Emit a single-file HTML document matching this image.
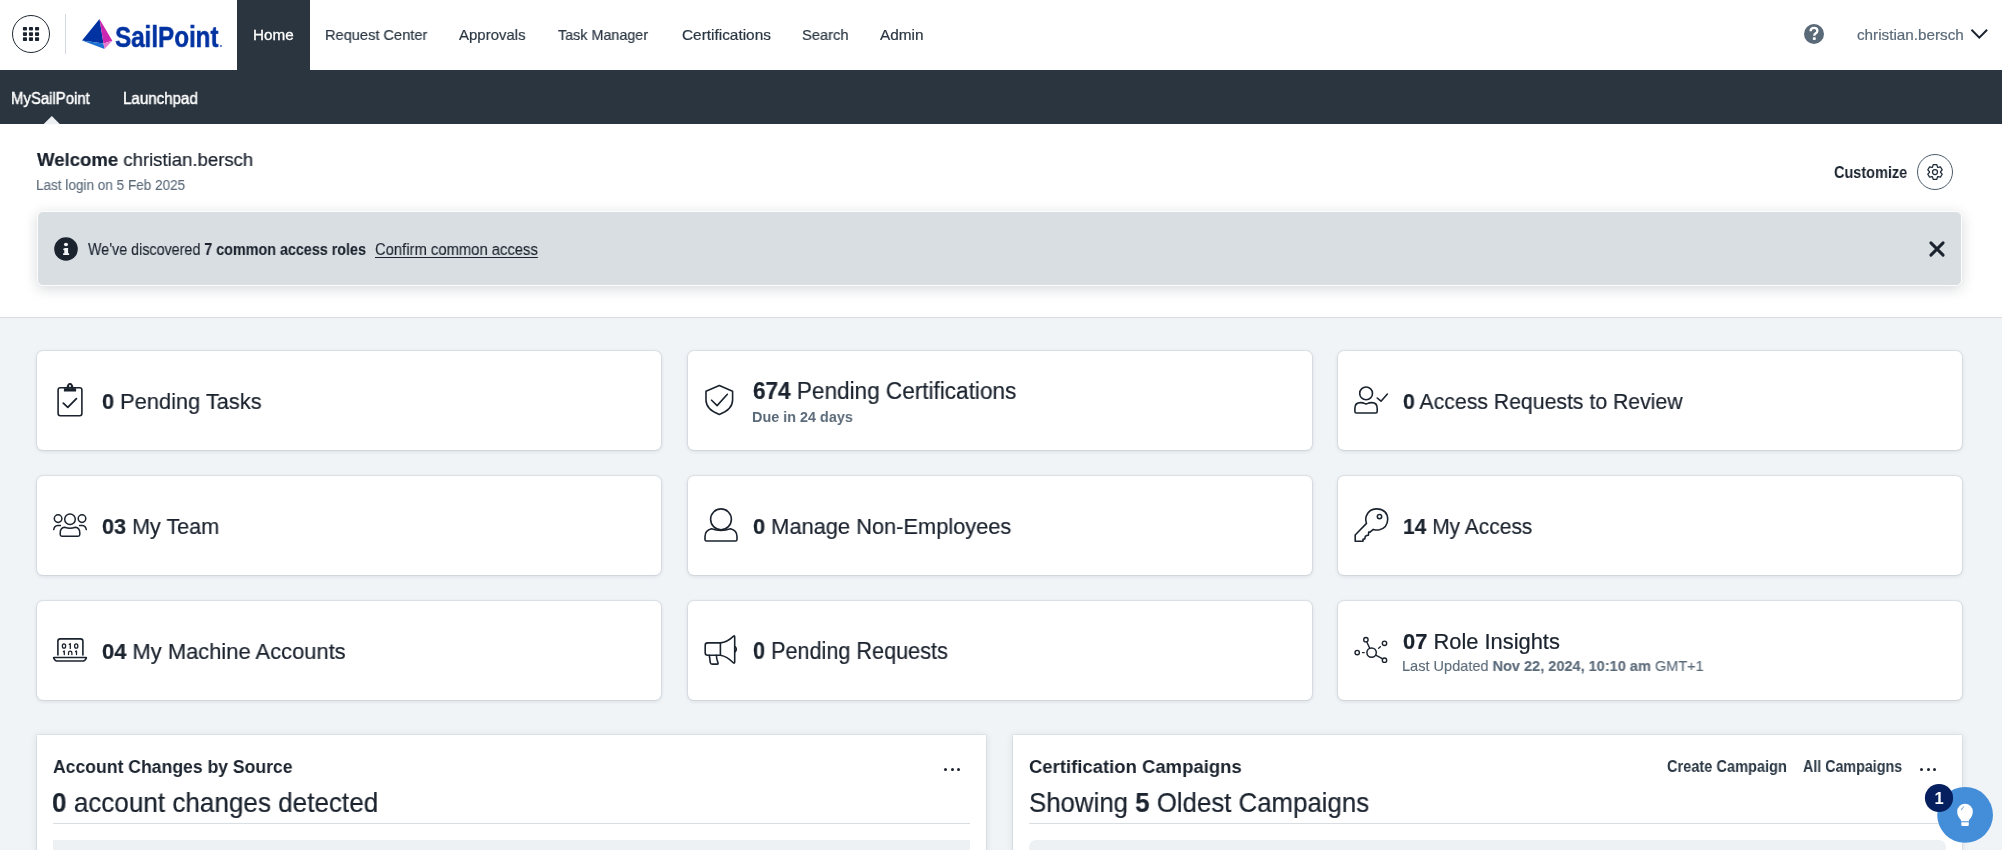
<!DOCTYPE html>
<html><head><meta charset="utf-8"><title>SailPoint</title><style>
*{box-sizing:border-box}
html,body{margin:0;padding:0}
body{width:2002px;height:850px;overflow:hidden;position:relative;background:#f0f4f7;font-family:"Liberation Sans",sans-serif}
.a{position:absolute}
.t{position:absolute;white-space:nowrap;line-height:normal;font-family:"Liberation Sans",sans-serif;transform-origin:0 0;will-change:transform}
.t b{font-weight:700}
.card{position:absolute;width:624.3px;height:99px;background:#fff;border-radius:6px;box-shadow:0 0 0 1px rgba(40,60,80,0.07),0 1px 4px rgba(30,45,60,0.14)}
.panel{position:absolute;background:#fff;box-shadow:0 0 0 1px rgba(40,60,80,0.06),0 1px 7px rgba(30,45,60,0.13)}
svg{position:absolute;overflow:visible}
</style></head><body>
<div class="a" style="left:0;top:0;width:2002px;height:70px;background:#fff"></div>
<div class="a" style="left:12px;top:15px;width:38px;height:38px;border-radius:50%;border:1.5px solid #1f2933"></div>
<svg class="a" style="left:0;top:0" width="60" height="70" viewBox="0 0 60 70" fill="#1b232e"><rect x="22.9" y="26.9" width="4.1" height="3.7" rx="0.8"/><rect x="22.9" y="32.2" width="4.1" height="3.7" rx="0.8"/><rect x="22.9" y="37.3" width="4.1" height="3.7" rx="0.8"/><rect x="28.9" y="26.9" width="4.1" height="3.7" rx="0.8"/><rect x="28.9" y="32.2" width="4.1" height="3.7" rx="0.8"/><rect x="28.9" y="37.3" width="4.1" height="3.7" rx="0.8"/><rect x="35.0" y="26.9" width="4.1" height="3.7" rx="0.8"/><rect x="35.0" y="32.2" width="4.1" height="3.7" rx="0.8"/><rect x="35.0" y="37.3" width="4.1" height="3.7" rx="0.8"/></svg>
<div class="a" style="left:65px;top:14px;width:1px;height:40px;background:#d3d9de"></div>
<svg class="a" style="left:0;top:0" width="240" height="70" viewBox="0 0 240 70">
<polygon points="99.5,19 82,40.5 103.5,43.5" fill="#0033a1"/>
<polygon points="99.5,19 112.3,40.8 103.5,43.5" fill="#cc27b0"/>
<polygon points="82,40.5 103.5,43.5 104.5,49" fill="#1a6fd0"/>
<polygon points="103.5,43.5 112.3,40.8 104.5,49" fill="#e27ad0"/>
</svg>
<div class="t" style="left:114.5px;top:19.8px;font-size:29.5px;font-weight:700;color:#0033a1;-webkit-text-stroke:0.5px #0033a1;transform:scaleX(0.82);transform-origin:0 0">SailPoint</div>
<div class="a" style="left:219.5px;top:44.5px;width:2.4px;height:2.4px;border-radius:50%;border:0.6px solid #0033a1"></div>
<div class="a" style="left:237px;top:0;width:73px;height:70px;background:#2b353f"></div>
<div class="t" style="left:252.6px;top:26.0px;font-size:15.0px;transform:scaleX(1.0179);font-weight:400;color:#ffffff;-webkit-text-stroke-width:0.3px;">Home</div>
<div class="t" style="left:325.3px;top:26.0px;font-size:15.0px;transform:scaleX(0.9741);font-weight:400;color:#2a3642;-webkit-text-stroke-width:0.2px;">Request Center</div>
<div class="t" style="left:459.4px;top:26.0px;font-size:15.0px;transform:scaleX(0.997);font-weight:400;color:#2a3642;-webkit-text-stroke-width:0.2px;">Approvals</div>
<div class="t" style="left:558.4px;top:26.0px;font-size:15.0px;transform:scaleX(0.9559);font-weight:400;color:#2a3642;-webkit-text-stroke-width:0.2px;">Task Manager</div>
<div class="t" style="left:681.6px;top:26.0px;font-size:15.0px;transform:scaleX(1.0253);font-weight:400;color:#2a3642;-webkit-text-stroke-width:0.2px;">Certifications</div>
<div class="t" style="left:801.6px;top:26.0px;font-size:15.0px;transform:scaleX(0.9783);font-weight:400;color:#2a3642;-webkit-text-stroke-width:0.2px;">Search</div>
<div class="t" style="left:880.0px;top:26.0px;font-size:15.0px;transform:scaleX(1.0238);font-weight:400;color:#2a3642;-webkit-text-stroke-width:0.2px;">Admin</div>
<div class="t" style="left:1856.8px;top:26.0px;font-size:15.0px;transform:scaleX(1.0162);font-weight:400;color:#5a6a78;-webkit-text-stroke-width:0.2px;">christian.bersch</div>
<svg class="a" style="left:1794px;top:14px" width="40" height="40" viewBox="0 0 40 40">
<circle cx="20" cy="20" r="10" fill="#5a6a78"/>
<path d="M16.6 17.2 Q16.6 13.8 20 13.8 Q23.4 13.8 23.4 16.8 Q23.4 18.6 21.4 19.6 Q20.3 20.2 20.3 21.8" stroke="#fff" stroke-width="2.3" fill="none" stroke-linecap="butt"/>
<rect x="18.9" y="23.3" width="2.8" height="2.6" fill="#fff"/>
</svg>
<svg class="a" style="left:1960px;top:20px" width="40" height="30" viewBox="0 0 40 30"><polyline points="11.5,9.8 19.3,17.6 27.1,9.8" stroke="#1b232e" stroke-width="2" fill="none"/></svg>
<div class="a" style="left:0;top:70px;width:2002px;height:54px;background:#2b353f"></div>
<div class="t" style="left:11.4px;top:90.2px;font-size:15.86px;transform:scaleX(0.941);font-weight:400;color:#ffffff;-webkit-text-stroke-width:0.45px;">MySailPoint</div>
<div class="t" style="left:122.6px;top:90.2px;font-size:15.86px;transform:scaleX(0.9532);font-weight:400;color:#ffffff;-webkit-text-stroke-width:0.45px;">Launchpad</div>
<div class="a" style="left:0;top:124px;width:2002px;height:194px;background:#fff;border-bottom:1px solid #d7dde2"></div>
<svg class="a" style="left:0;top:110px" width="100" height="20" viewBox="0 0 100 20"><polygon points="43.5,14.2 51.8,6 60,14.2" fill="#eef1f4"/></svg>
<div class="t" style="left:36.6px;top:148.8px;font-size:18.86px;transform:scaleX(0.9836);font-weight:400;color:#1b232e;-webkit-text-stroke-width:0.22px;"><b>Welcome</b> christian.bersch</div>
<div class="t" style="left:35.6px;top:176.7px;font-size:14.0px;transform:scaleX(0.968);font-weight:400;color:#5b6a79;-webkit-text-stroke-width:0.12px;">Last login on 5 Feb 2025</div>
<div class="t" style="left:1834.0px;top:163.4px;font-size:16.57px;transform:scaleX(0.8739);font-weight:700;color:#1b232e;">Customize</div>
<div class="a" style="left:1917px;top:154px;width:36px;height:36px;border-radius:50%;border:1.1px solid #4d5b69"></div>
<svg class="a" style="left:1895px;top:132px" width="80" height="80" viewBox="0 0 80 80"><path d="M37.50,35.10 L38.19,32.72 L41.81,32.72 L42.50,35.10 L43.00,35.39 L45.40,34.79 L47.21,37.93 L45.49,39.71 L45.49,40.29 L47.21,42.07 L45.40,45.21 L43.00,44.61 L42.50,44.90 L41.81,47.28 L38.19,47.28 L37.50,44.90 L37.00,44.61 L34.60,45.21 L32.79,42.07 L34.51,40.29 L34.51,39.71 L32.79,37.93 L34.60,34.79 L37.00,35.39Z" fill="none" stroke="#1f2a36" stroke-width="1.25" stroke-linejoin="round"/><circle cx="40" cy="40" r="2.5" fill="none" stroke="#1f2a36" stroke-width="1.25"/></svg>
<div class="a" style="left:37px;top:211px;width:1925px;height:75px;background:#d9dee2;border:1.2px solid #fdfdfe;border-radius:6px;box-shadow:0 3px 13px rgba(20,30,40,0.17)"></div>
<svg class="a" style="left:40px;top:223px" width="52" height="52" viewBox="0 0 52 52">
<circle cx="26" cy="26" r="11.8" fill="#1b232e"/>
<ellipse cx="26" cy="21.4" rx="2.05" ry="1.75" fill="#f2f4f6"/>
<path d="M23.3 25.7 L25.1 25 H28.1 V30.3 H29.1 V32 H23.1 V30.3 H24.3 V27.2 L23.3 26.9 Z" fill="#f2f4f6"/>
</svg>
<div class="t" style="left:88.0px;top:240.4px;font-size:16.29px;transform:scaleX(0.8797);font-weight:400;color:#1b232e;-webkit-text-stroke-width:0.12px;">We've discovered <b>7 common access roles</b></div>
<div class="t" style="left:374.5px;top:240.4px;font-size:16.29px;transform:scaleX(0.9089);font-weight:400;color:#1b232e;text-decoration:underline;text-underline-offset:2px;-webkit-text-stroke-width:0.12px;">Confirm common access</div>
<svg class="a" style="left:1917px;top:229px" width="40" height="40" viewBox="0 0 40 40"><path d="M13.9 13.9 L26.1 26.1 M26.1 13.9 L13.9 26.1" stroke="#1b232e" stroke-width="3" stroke-linecap="round"/></svg>
<div class="card" style="left:37px;top:350.5px"></div>
<div class="card" style="left:37px;top:475.5px"></div>
<div class="card" style="left:37px;top:600.5px"></div>
<div class="card" style="left:687.5px;top:350.5px"></div>
<div class="card" style="left:687.5px;top:475.5px"></div>
<div class="card" style="left:687.5px;top:600.5px"></div>
<div class="card" style="left:1337.7px;top:350.5px"></div>
<div class="card" style="left:1337.7px;top:475.5px"></div>
<div class="card" style="left:1337.7px;top:600.5px"></div>
<svg class="a" style="left:0;top:0" width="2002" height="850" viewBox="0 0 2002 850">
<!-- clipboard -->
<rect x="58.1" y="387.8" width="23.8" height="28" rx="2.2" stroke="#1b232e" fill="none" stroke-linecap="round" stroke-linejoin="round" stroke-width="1.6"/>
<path d="M64.5 388.8 H75.5 V391 H64.5 Z" fill="#1b232e" stroke="#1b232e" stroke-width="1.2"/>
<path d="M67.3 388.6 Q67.6 383.8 70 383.8 Q72.4 383.8 72.7 388.6" stroke="#1b232e" fill="none" stroke-linecap="round" stroke-linejoin="round" stroke-width="1.6"/><circle cx="70" cy="386.1" r="1.7" stroke="#1b232e" fill="none" stroke-linecap="round" stroke-linejoin="round" stroke-width="1.4"/>
<polyline points="63.3,403.2 67.8,407.4 76.4,398.7" stroke="#1b232e" fill="none" stroke-linecap="round" stroke-linejoin="round" stroke-width="1.8"/>
<!-- shield -->
<path d="M719.3 385.6 L732.6 391.3 V400 Q732.6 409.5 719.3 414.4 Q706 409.5 706 400 V391.3 Z" stroke="#1b232e" fill="none" stroke-linecap="round" stroke-linejoin="round" stroke-width="1.6"/>
<polyline points="711.6,400.2 717.1,405.6 727.4,394.3" stroke="#1b232e" fill="none" stroke-linecap="round" stroke-linejoin="round" stroke-width="1.6"/>
<!-- person check -->
<circle cx="1366.1" cy="393.4" r="6.4" stroke="#1b232e" fill="none" stroke-linecap="round" stroke-linejoin="round" stroke-width="1.6"/>
<path d="M1360.5 402.6 Q1363.3 402.6 1364.4 403.4 Q1366.1 404.4 1367.8 403.4 Q1368.9 402.6 1371.7 402.6 Q1377.2 402.6 1377.2 408.2 V411.5 Q1377.2 413 1375.7 413 H1356.4 Q1354.9 413 1354.9 411.5 V408.2 Q1354.9 402.6 1360.5 402.6 Z" stroke="#1b232e" fill="none" stroke-linecap="round" stroke-linejoin="round" stroke-width="1.6"/>
<polyline points="1377.2,398 1381,401.2 1387.4,394" stroke="#1b232e" fill="none" stroke-linecap="round" stroke-linejoin="round" stroke-width="1.6"/>
<!-- team -->
<circle cx="70" cy="519.3" r="5.3" stroke="#1b232e" fill="none" stroke-linecap="round" stroke-linejoin="round" stroke-width="1.5"/>
<circle cx="58.1" cy="518.6" r="3.8" stroke="#1b232e" fill="none" stroke-linecap="round" stroke-linejoin="round" stroke-width="1.5"/>
<circle cx="82" cy="518.6" r="3.8" stroke="#1b232e" fill="none" stroke-linecap="round" stroke-linejoin="round" stroke-width="1.5"/>
<path d="M64.6 527.3 Q70 529.3 75.4 527.3 Q79.8 527.8 79.8 533 V534.5 Q79.8 536.2 78.1 536.2 H61.9 Q60.2 536.2 60.2 534.5 V533 Q60.2 527.8 64.6 527.3 Z" stroke="#1b232e" fill="none" stroke-linecap="round" stroke-linejoin="round" stroke-width="1.5"/>
<path d="M53.7 529.6 Q54.4 525.7 57.6 525.5 H60.4" stroke="#1b232e" fill="none" stroke-linecap="round" stroke-linejoin="round" stroke-width="1.5"/>
<path d="M86.3 529.6 Q85.6 525.7 82.4 525.5 H79.6" stroke="#1b232e" fill="none" stroke-linecap="round" stroke-linejoin="round" stroke-width="1.5"/>
<!-- person -->
<circle cx="721" cy="519.3" r="10.4" stroke="#1b232e" fill="none" stroke-linecap="round" stroke-linejoin="round" stroke-width="1.6"/>
<path d="M711.5 528.8 Q721 532 730.5 528.8 Q737 530.5 737 536.5 V539.5 Q737 541 735.5 541 H706.5 Q705 541 705 539.5 V536.5 Q705 530.5 711.5 528.8 Z" stroke="#1b232e" fill="none" stroke-linecap="round" stroke-linejoin="round" stroke-width="1.6"/>
<!-- key -->
<path d="M1366.5 523.4 Q1365 519 1366.5 515.6 Q1369.5 508.6 1377 508.9 Q1387.6 509.6 1387.7 519.5 Q1387.4 527.7 1379.5 529.8 Q1376.4 530.4 1373.3 529.4 L1370 532.2 L1368.7 532.1 L1368.4 535.3 L1366.7 535.5 L1365.3 536.4 L1364.8 538.9 L1363 539.3 L1363 541.2 H1355.2 V535 Z" stroke="#1b232e" fill="none" stroke-linecap="round" stroke-linejoin="round" stroke-width="1.6"/>
<circle cx="1379.5" cy="516.6" r="2.2" stroke="#1b232e" fill="none" stroke-linecap="round" stroke-linejoin="round" stroke-width="1.5"/>
<!-- laptop -->
<path d="M57.9 655 V641.3 Q57.9 638.9 60.3 638.9 H80.5 Q82.9 638.9 82.9 641.3 V655" stroke="#1b232e" fill="none" stroke-linecap="round" stroke-linejoin="round" stroke-width="1.6"/>
<path d="M53.9 657.6 H86.1 Q86.7 657.6 86.3 658.3 L85.1 660 Q84.3 661.1 82.9 661.1 H57.1 Q55.7 661.1 54.9 660 L53.7 658.3 Q53.3 657.6 53.9 657.6 Z" stroke="#1b232e" fill="none" stroke-linecap="round" stroke-linejoin="round" stroke-width="1.5"/>
<ellipse cx="64" cy="646" rx="1.65" ry="2.2" stroke="#1b232e" fill="none" stroke-linecap="round" stroke-linejoin="round" stroke-width="1.3"/>
<ellipse cx="76.2" cy="646" rx="1.65" ry="2.2" stroke="#1b232e" fill="none" stroke-linecap="round" stroke-linejoin="round" stroke-width="1.3"/>
<path d="M69.3 644.4 L70.3 643.7 V648.4" stroke="#1b232e" fill="none" stroke-linecap="round" stroke-linejoin="round" stroke-width="1.3"/>
<path d="M63.4 651.6 L64.3 651 V654.6" stroke="#1b232e" fill="none" stroke-linecap="round" stroke-linejoin="round" stroke-width="1.3"/>
<path d="M68.5 654.6 V653 Q68.5 651.2 70.2 651.2 Q71.9 651.2 71.9 653 V654.6" stroke="#1b232e" fill="none" stroke-linecap="round" stroke-linejoin="round" stroke-width="1.3"/>
<path d="M75.6 651.6 L76.5 651 V654.6" stroke="#1b232e" fill="none" stroke-linecap="round" stroke-linejoin="round" stroke-width="1.3"/>
<!-- megaphone -->
<path d="M705.2 645.3 Q705.2 642.9 707.6 642.9 H720.4 Q727 642.2 733.3 636.3 Q734.7 635.3 734.7 636.9 V662.1 Q734.7 663.7 733.3 662.7 Q727 656.3 720.4 655.2 H707.6 Q705.2 655.2 705.2 652.8 Z" stroke="#1b232e" fill="none" stroke-linecap="round" stroke-linejoin="round" stroke-width="1.6"/>
<line x1="720.4" y1="642.9" x2="720.4" y2="655.2" stroke="#1b232e" fill="none" stroke-linecap="round" stroke-linejoin="round" stroke-width="1.6"/>
<path d="M709.3 655.2 L710.3 662.6 Q710.6 664.1 712 664.1 H717.3 Q718.4 664.1 718 662.9 Q716.5 659.5 716.4 655.2" stroke="#1b232e" fill="none" stroke-linecap="round" stroke-linejoin="round" stroke-width="1.6"/>
<path d="M735.3 646.8 Q737.3 649.3 735.3 651.8" stroke="#1b232e" fill="none" stroke-linecap="round" stroke-linejoin="round" stroke-width="1.5"/>
<!-- network -->
<circle cx="1371.6" cy="652.6" r="4.7" stroke="#1b232e" fill="none" stroke-linecap="round" stroke-linejoin="round" stroke-width="1.5"/>
<circle cx="1365.9" cy="639.7" r="2.2" stroke="#1b232e" fill="none" stroke-linecap="round" stroke-linejoin="round" stroke-width="1.4"/>
<circle cx="1384.5" cy="643.3" r="2.2" stroke="#1b232e" fill="none" stroke-linecap="round" stroke-linejoin="round" stroke-width="1.4"/>
<circle cx="1357.2" cy="652.6" r="2.2" stroke="#1b232e" fill="none" stroke-linecap="round" stroke-linejoin="round" stroke-width="1.4"/>
<circle cx="1384.5" cy="660.2" r="2.2" stroke="#1b232e" fill="none" stroke-linecap="round" stroke-linejoin="round" stroke-width="1.4"/>
<line x1="1366.9" y1="642.2" x2="1369.6" y2="647.9" stroke="#1b232e" fill="none" stroke-linecap="round" stroke-linejoin="round" stroke-width="1.4"/>
<line x1="1378.6" y1="648.2" x2="1380.4" y2="646.8" stroke="#1b232e" fill="none" stroke-linecap="round" stroke-linejoin="round" stroke-width="1.4"/>
<line x1="1362.5" y1="652.6" x2="1364.2" y2="652.6" stroke="#1b232e" fill="none" stroke-linecap="round" stroke-linejoin="round" stroke-width="1.4"/>
<line x1="1376.2" y1="655.3" x2="1382.3" y2="658.6" stroke="#1b232e" fill="none" stroke-linecap="round" stroke-linejoin="round" stroke-width="1.4"/>
</svg>
<div class="t" style="left:101.7px;top:388.0px;font-size:22.86px;transform:scaleX(0.9536);font-weight:400;color:#1b232e;-webkit-text-stroke-width:0.22px;"><b>0</b> Pending Tasks</div>
<div class="t" style="left:752.6px;top:377.8px;font-size:23.0px;transform:scaleX(0.9806);font-weight:400;color:#1b232e;-webkit-text-stroke-width:0.22px;"><b>674</b> Pending Certifications</div>
<div class="t" style="left:751.6px;top:408.7px;font-size:14.43px;transform:scaleX(0.998);font-weight:700;color:#5b6a79;">Due in 24 days</div>
<div class="t" style="left:1402.6px;top:388.9px;font-size:22.29px;transform:scaleX(0.9524);font-weight:400;color:#1b232e;-webkit-text-stroke-width:0.22px;"><b>0</b> Access Requests to Review</div>
<div class="t" style="left:102.0px;top:514.0px;font-size:22.43px;transform:scaleX(0.9629);font-weight:400;color:#1b232e;-webkit-text-stroke-width:0.22px;"><b>03</b> My Team</div>
<div class="t" style="left:752.7px;top:514.2px;font-size:22.57px;transform:scaleX(0.9671);font-weight:400;color:#1b232e;-webkit-text-stroke-width:0.22px;"><b>0</b> Manage Non-Employees</div>
<div class="t" style="left:1402.5px;top:514.0px;font-size:22.43px;transform:scaleX(0.935);font-weight:400;color:#1b232e;-webkit-text-stroke-width:0.22px;"><b>14</b> My Access</div>
<div class="t" style="left:101.5px;top:638.6px;font-size:22.29px;transform:scaleX(0.9838);font-weight:400;color:#1b232e;-webkit-text-stroke-width:0.22px;"><b>04</b> My Machine Accounts</div>
<div class="t" style="left:752.7px;top:637.8px;font-size:23.14px;transform:scaleX(0.9354);font-weight:400;color:#1b232e;-webkit-text-stroke-width:0.22px;"><b>0</b> Pending Requests</div>
<div class="t" style="left:1402.7px;top:628.8px;font-size:21.86px;transform:scaleX(1.0007);font-weight:400;color:#1b232e;-webkit-text-stroke-width:0.22px;"><b>07</b> Role Insights</div>
<div class="t" style="left:1401.7px;top:658.4px;font-size:14.57px;transform:scaleX(0.9979);font-weight:400;color:#5b6a79;-webkit-text-stroke-width:0.12px;">Last Updated <b>Nov 22, 2024, 10:10 am</b> GMT+1</div>
<div class="panel" style="left:37px;top:735px;width:949px;height:140px"></div>
<div class="panel" style="left:1013px;top:735px;width:949px;height:140px"></div>
<div class="a" style="left:53px;top:823px;width:917px;height:1px;background:#d9dee3"></div>
<div class="a" style="left:53px;top:840px;width:917px;height:20px;background:#edf1f4"></div>
<div class="a" style="left:1029px;top:823px;width:917px;height:1px;background:#d9dee3"></div>
<div class="a" style="left:1029px;top:840px;width:917px;height:20px;background:#edf1f4;border-radius:7px"></div>
<div class="t" style="left:53.0px;top:756.4px;font-size:19.14px;transform:scaleX(0.92);font-weight:700;color:#1b232e;">Account Changes by Source</div>
<div class="t" style="left:52.0px;top:787.0px;font-size:27.14px;transform:scaleX(0.9614);font-weight:400;color:#1b232e;-webkit-text-stroke-width:0.22px;"><b>0</b> account changes detected</div>
<div class="t" style="left:1028.9px;top:755.9px;font-size:18.86px;transform:scaleX(0.9801);font-weight:700;color:#1b232e;">Certification Campaigns</div>
<div class="t" style="left:1028.9px;top:787.5px;font-size:26.86px;transform:scaleX(0.9611);font-weight:400;color:#1b232e;-webkit-text-stroke-width:0.22px;">Showing <b>5</b> Oldest Campaigns</div>
<div class="t" style="left:1666.7px;top:757.9px;font-size:15.57px;transform:scaleX(0.9363);font-weight:700;color:#2a3744;">Create Campaign</div>
<div class="t" style="left:1802.8px;top:757.9px;font-size:15.57px;transform:scaleX(0.9167);font-weight:700;color:#2a3744;">All Campaigns</div>
<div class="a" style="left:944.0px;top:767.5px;width:3.2px;height:3.2px;border-radius:50%;background:#1b232e"></div>
<div class="a" style="left:950.5px;top:767.5px;width:3.2px;height:3.2px;border-radius:50%;background:#1b232e"></div>
<div class="a" style="left:957.0px;top:767.5px;width:3.2px;height:3.2px;border-radius:50%;background:#1b232e"></div>
<div class="a" style="left:1920.0px;top:767.5px;width:3.2px;height:3.2px;border-radius:50%;background:#1b232e"></div>
<div class="a" style="left:1926.5px;top:767.5px;width:3.2px;height:3.2px;border-radius:50%;background:#1b232e"></div>
<div class="a" style="left:1933.0px;top:767.5px;width:3.2px;height:3.2px;border-radius:50%;background:#1b232e"></div>
<svg class="a" style="left:1900px;top:770px" width="102" height="80" viewBox="0 0 102 80">
<circle cx="65.1" cy="44.9" r="27.9" fill="#3e8ad8" fill-opacity="0.97"/>
<path d="M60.6 49.6 Q57.2 46.2 57.2 41.6 A7.8 7.8 0 0 1 72.8 41.6 Q72.8 46.2 69.4 49.6 Q68.9 50.3 68.9 51.2 H61.1 Q61.1 50.3 60.6 49.6 Z" fill="#fff"/>
<path d="M61.3 52.2 H68.8 V55 Q68.8 56.1 67.7 56.1 H62.4 Q61.3 56.1 61.3 55 Z" fill="#fff"/>
<path d="M61.4 40.2 Q61.9 37.6 64.1 36.6" stroke="#3e8ad8" stroke-width="0.8" fill="none"/>
<circle cx="39" cy="28" r="14.1" fill="#06205f"/>
<text x="39" y="33.9" font-family="Liberation Sans" font-size="16.5" font-weight="700" fill="#fff" text-anchor="middle">1</text>
</svg>
</body></html>
